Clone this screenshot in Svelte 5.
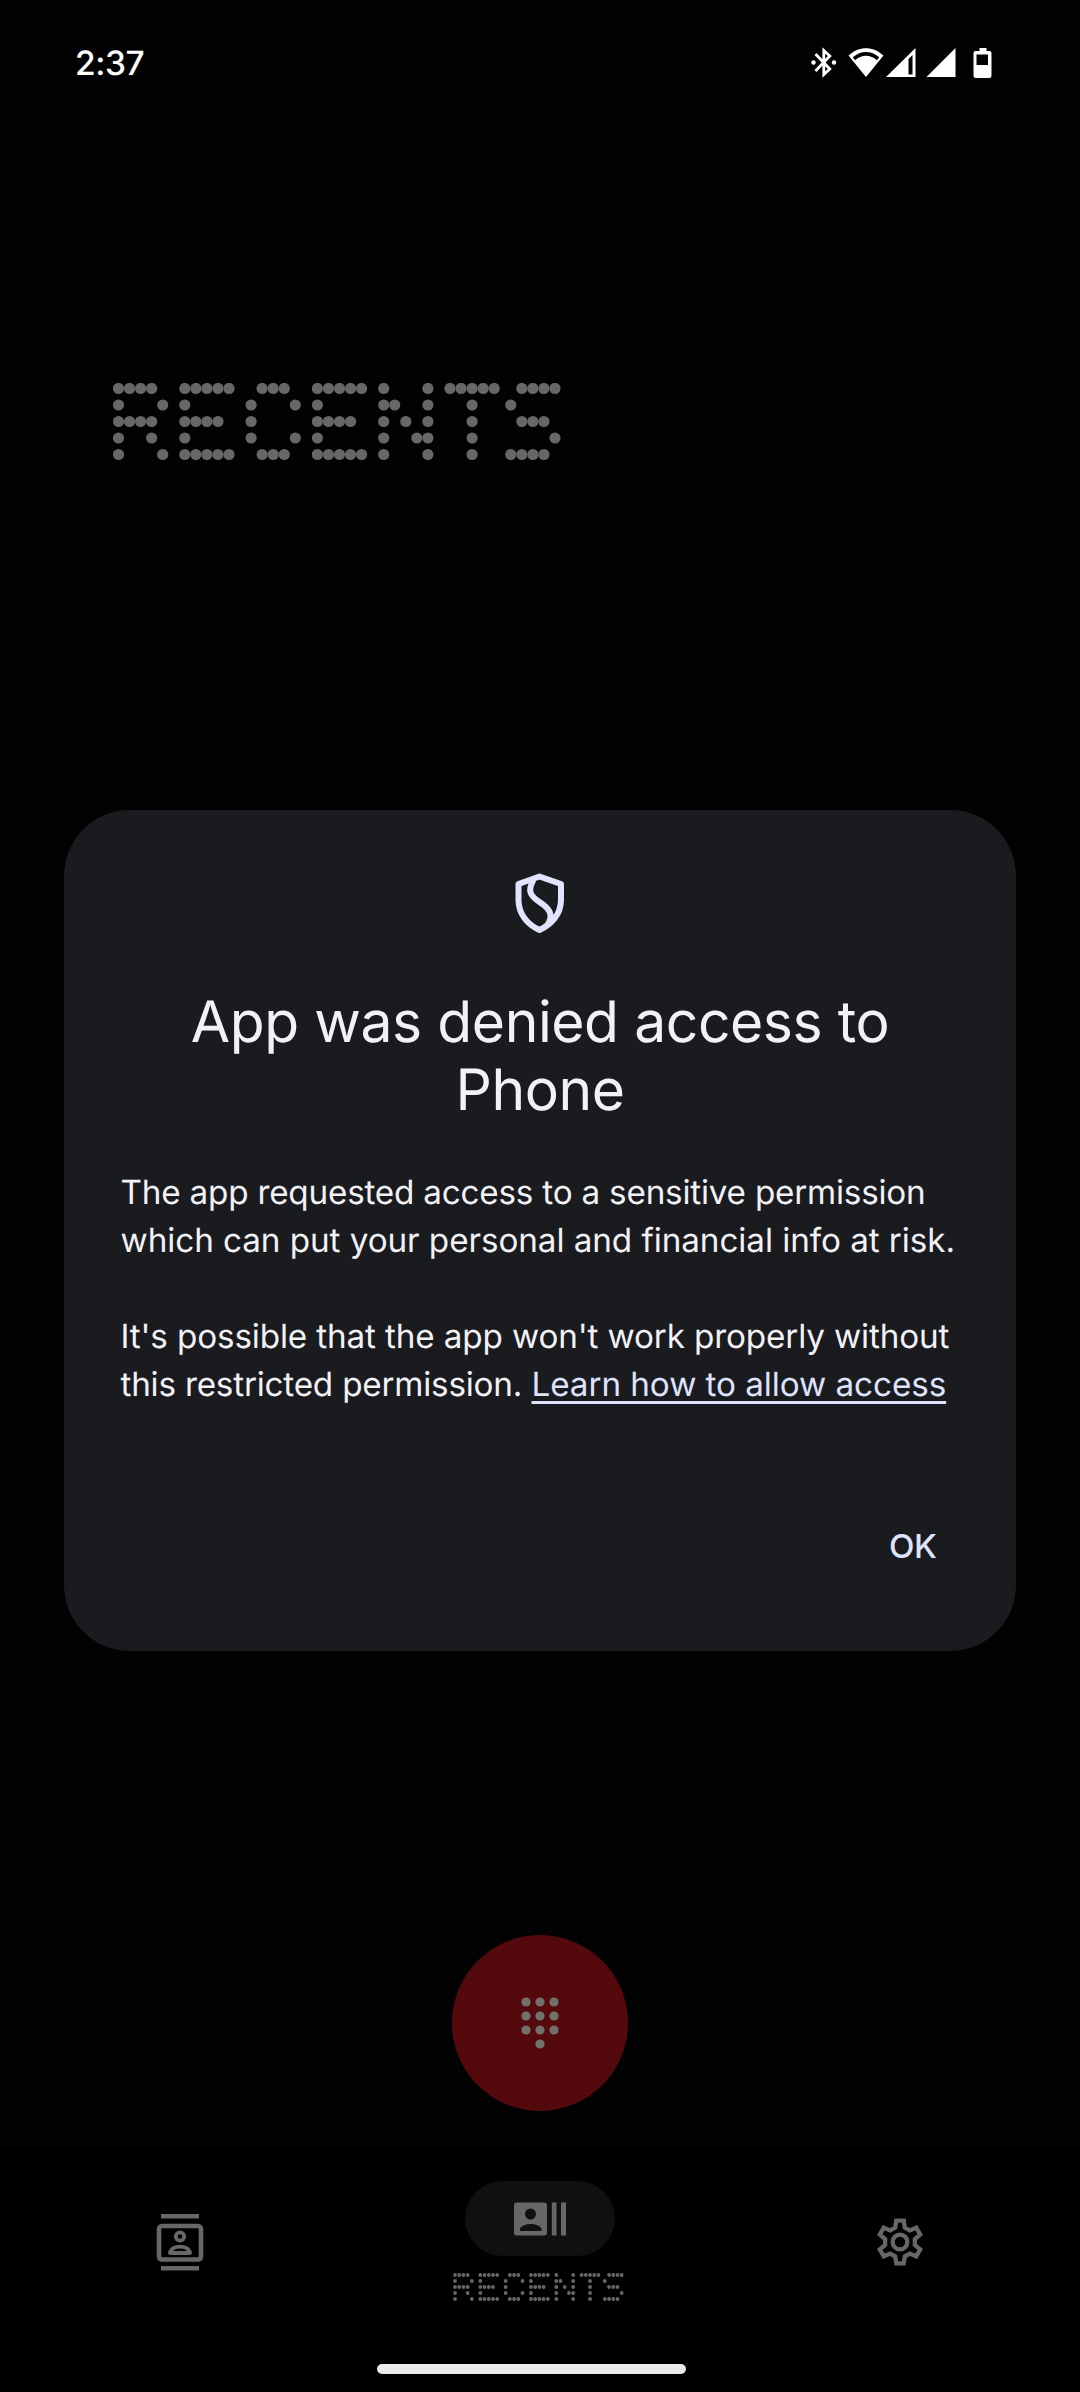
<script>
  const glyphs = {
    R: ['####.', '#...#', '####.', '#..#.', '#...#'],
    E: ['#####', '#....', '####.', '#....', '#####'],
    C: ['.###.', '#...#', '#....', '#...#', '.###.'],
    N: ['#...#', '##..#', '#.#.#', '#..##', '#...#'],
    T: ['#####', '..#..', '..#..', '..#..', '..#..'],
    S: ['.####', '#....', '.###.', '....#', '####.'],
  };
  // T is set tighter than the other letters.
  const advance = { T: 5.5 };

  function dots(word, dx, dy, r) {
    const out = [];
    let col = 0;
    for (const ch of word) {
      glyphs[ch].forEach((row, y) => {
        [...row].forEach((c, x) => {
          if (c === '#') out.push({ x: (col + x) * dx + r, y: y * dy + r });
        });
      });
      col += advance[ch] ?? 6;
    }
    return out;
  }

  const title = dots('RECENTS', 11.05, 16.5, 5.5);
  const label = dots('RECENTS', 4.22, 6, 2);
  const keys = [0, 1, 2, 3, 4, 5, 6, 7, 8, 10];
</script>

<div class="screen">
  <header class="status">
    <span class="time">2:37</span>
    <svg class="indicators" width="182" height="32" viewBox="0 0 182 32" fill="#fff">
      <path fill="none" stroke="#fff" stroke-width="2.800" d="M4.500 7 18.800 22 12.800 27.500V3.500L18.800 9 4.500 24" />
      <circle cx="2.500" cy="15.500" r="2.200" />
      <circle cx="23" cy="15.500" r="2.200" />
      <path fill-rule="evenodd" d="M37.500 8.500C48-1.300 62-1.300 72.500 8.500L55 30ZM41.800 10.200 44 13.200C50.500 7.200 59.500 7.200 66 13.200L68.200 10.200C60 3.300 50 3.300 41.800 10.200Z" />
      <path fill-rule="evenodd" d="M75 30 104.500 1V30ZM97.500 12V27.500H101.500V8Z" />
      <path d="M115.500 30 144.500 1V30Z" />
      <path fill-rule="evenodd" d="M168.500 1h7v3h3q2 0 2 2v22.500q0 2.500-2.500 2.500h-13q-2.500 0-2.500-2.500v-22.500q0-2 2-2h4ZM165.500 7.500V18h11.500V7.500Z" />
    </svg>
  </header>

  <main>
    <svg class="title" role="img" aria-label="RECENTS" width="460" height="78" viewBox="0 0 460 78">
      {#each title as d}<circle cx={d.x} cy={d.y} r="5.6" />{/each}
    </svg>

    <section class="dialog" role="dialog" aria-labelledby="dialog-title">
      <svg class="shield" width="52" height="62" viewBox="0 0 52 62" fill="none" stroke="#e0e4ff" stroke-width="6" stroke-linejoin="round">
        <path d="M25.500 4.500 4.500 12V28C4.500 42 13.500 52.500 25.500 58 37.500 52.500 47 42 47 28V12Z" />
        <path d="M19.500 8C13 19 16.500 24 25.500 30 36.500 37 39.500 43 33.500 53" />
      </svg>
      <h1 id="dialog-title">App was denied access to<br />Phone</h1>
      <div class="body">
        <p>
          <span class="tight">The app requested access to a sensitive permission</span><br />
          <span class="snug">which can put your personal and financial info at risk.</span>
        </p>
        <p>
          <span class="close">It's possible that the app won't work properly without</span><br />
          <span class="tight">this restricted permission.</span> <a class="snug" href="#learn">Learn how to allow access</a>
        </p>
      </div>
      <button class="ok">OK</button>
    </section>

    <button class="fab" aria-label="Dial pad">
      <svg width="40" height="54" viewBox="0 0 40 54" fill="#71716c">
        {#each keys as k}
          <circle cx={6 + (k % 3) * 14} cy={6 + Math.floor(k / 3) * 14} r="4.600" />
        {/each}
      </svg>
    </button>
  </main>

  <nav>
    <div class="tab">
      <svg width="48" height="58" viewBox="0 0 48 58" fill="none" stroke="#676767" stroke-width="4.600">
        <path d="M5 3.300H43M5 55.200H43" />
        <rect x="3" y="13" width="42" height="33.500" rx="3" />
        <circle cx="24" cy="23.500" r="4.200" stroke-width="3.800" />
        <path stroke-width="3.800" stroke-linejoin="round" d="M14 40V39C16 35 20 33.700 24 33.700S32 35 34 39V40Z" />
      </svg>
    </div>
    <div class="tab active">
      <div class="pill">
        <svg width="54" height="34" viewBox="0 0 54 34" fill="#676767">
          <path fill-rule="evenodd" d="M3.500 .5H31Q34 .5 34 3.500V30.500Q34 33.500 31 33.500H3.500Q1 33.500 1 30.500V3.500Q1 .5 3.500 .5ZM17.500 6.500A5.500 5.500 0 1 0 17.500 17.500 5.500 5.500 0 1 0 17.500 6.500ZM7 29H28.500V26.500C25.500 20.500 10 20.500 7 26.500Z" />
          <path d="M38.800 .5h4.700v33h-4.700zM48 .5h5v33h-5z" />
        </svg>
      </div>
      <svg class="label" role="img" aria-label="RECENTS" width="174" height="30" viewBox="0 0 174 30">
        {#each label as d}<circle cx={d.x} cy={d.y} r="1.900" />{/each}
      </svg>
    </div>
    <div class="tab">
      <svg width="50" height="50" viewBox="1.600 .6 46.800 46.800" fill="none" stroke="#676767" stroke-width="4">
        <path d="M21.500 4h7l1 6.500 4.700 2.700 6-2.500 3.700 6.300-5 4.200v5.600l5 4.200-3.700 6.300-6-2.500-4.700 2.700-1 6.500h-7l-1-6.500-4.700-2.700-6 2.500-3.700-6.300 5-4.200v-5.600l-5-4.200 3.700-6.300 6 2.500 4.700-2.700z" />
        <circle cx="25" cy="24" r="6.900" />
      </svg>
    </div>
  </nav>
  <div class="home"><span></span></div>
</div>

<style>
  :global(body) { margin: 0; background: #000; }
  .screen {
    width: 1080px; height: 2392px; display: flex; flex-direction: column;
    background: #020202; color: #f2f1f6; font-family: Inter, Roboto, sans-serif; overflow: hidden;
    text-rendering: geometricPrecision;
  }
  .status {
    height: 126px; box-sizing: border-box; display: flex; justify-content: space-between;
    align-items: center; padding: 0 87px 0 75px; flex: none;
  }
  .time { font-size: 33.500px; font-weight: 500; color: #fff; line-height: 40px; letter-spacing: -0.4px; padding-top: 1px; }
  main { display: flex; flex-direction: column; height: 2022px; align-items: center; flex: none; }
  .title { align-self: flex-start; margin: 257px 0 0 112.500px; fill: #676767; flex: none; }
  .dialog {
    margin-top: 349px; width: 952px; height: 841px; flex: none; box-sizing: border-box;
    padding: 62px 57px 0; border-radius: 66px; background: #1a1b1f;
    display: flex; flex-direction: column; align-items: center;
  }
  h1 { margin: 54px 0 0; font-size: 57px; line-height: 68px; font-weight: 400; letter-spacing: -0.42px; text-align: center; white-space: nowrap; }
  .body { align-self: stretch; margin: 45px 0 0 -0.500px; font-size: 33.250px; line-height: 48px; white-space: nowrap; }
  p { margin: 0 0 48px; }
  .tight { letter-spacing: -0.21px; }
  .close { letter-spacing: -0.14px; }
  .snug { letter-spacing: -0.07px; }
  a { color: #dfe2fd; text-decoration: underline; text-decoration-thickness: 2.500px; text-underline-offset: 5px; }
  button { border: 0; padding: 0; background: none; font-family: inherit; }
  .ok { align-self: flex-end; margin: 65px 22.500px 0 0; font-size: 33.250px; line-height: 48px; font-weight: 500; letter-spacing: -0.4px; color: #dfe2fd; }
  .fab {
    margin-top: 284px; width: 176px; height: 176px; border-radius: 50%; background: #540a0c; flex: none;
    display: flex; align-items: center; justify-content: center;
  }
  nav { height: 190px; flex: none; background: #000; display: grid; grid-template-columns: repeat(3, 360px); }
  .tab { display: flex; align-items: center; justify-content: center; padding-bottom: 3px; }
  .active { flex-direction: column; justify-content: flex-start; padding-top: 33px; }
  .pill { width: 150px; height: 75px; border-radius: 38px; background: #101010; display: flex; align-items: center; justify-content: center; }
  .label { margin-top: 17px; fill: #676767; }
  .home { flex: 1; background: #000; display: flex; padding: 25.500px 0 0 377px; }
  .home span { width: 309px; height: 10px; border-radius: 5px; background: #ebebeb; }
</style>
